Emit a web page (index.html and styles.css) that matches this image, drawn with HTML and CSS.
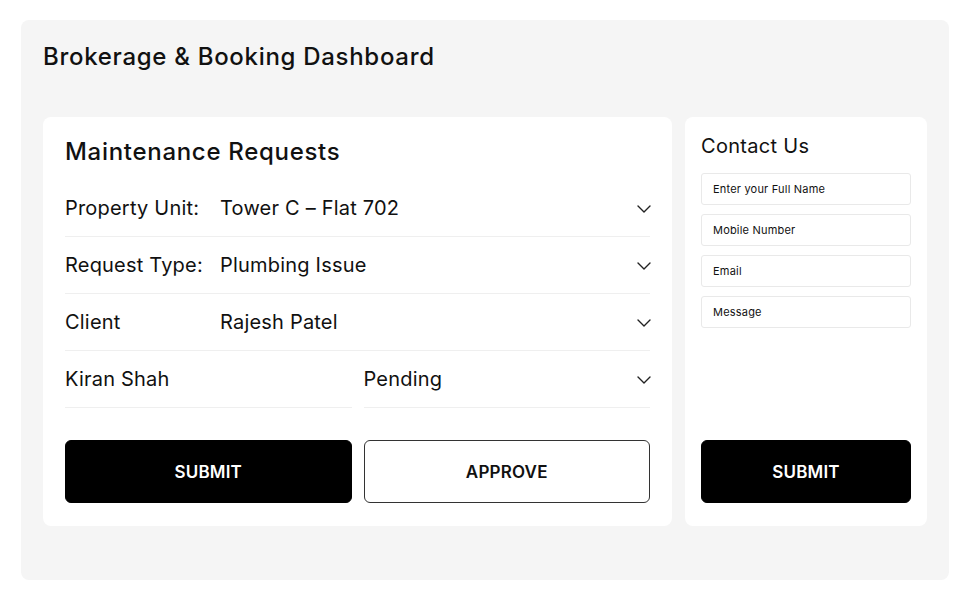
FILE: index.html
```html
<!DOCTYPE html>
<html lang="en">
<head>
<meta charset="utf-8">
<title>Brokerage &amp; Booking Dashboard</title>
<link rel="stylesheet" href="styles.css">
</head>
<body>
<div class="page">
  <main class="shell">
    <h1 class="title">Brokerage &amp; Booking Dashboard</h1>
    <div class="cards">
      <section class="card main-card">
        <h2 class="card-title">Maintenance Requests</h2>
        <div class="rows">
          <div class="row">
            <span class="label">Property Unit:</span>
            <span class="value">Tower C – Flat 702</span>
            <svg class="chev" viewBox="0 0 14 8" width="14" height="8"><path d="M1 1l6 6 6-6" fill="none" stroke="#222" stroke-width="1.4" stroke-linecap="round" stroke-linejoin="round"/></svg>
          </div>
          <div class="row">
            <span class="label">Request Type:</span>
            <span class="value">Plumbing Issue</span>
            <svg class="chev" viewBox="0 0 14 8" width="14" height="8"><path d="M1 1l6 6 6-6" fill="none" stroke="#222" stroke-width="1.4" stroke-linecap="round" stroke-linejoin="round"/></svg>
          </div>
          <div class="row">
            <span class="label">Client</span>
            <span class="value">Rajesh Patel</span>
            <svg class="chev" viewBox="0 0 14 8" width="14" height="8"><path d="M1 1l6 6 6-6" fill="none" stroke="#222" stroke-width="1.4" stroke-linecap="round" stroke-linejoin="round"/></svg>
          </div>
          <div class="split">
            <div class="row">
              <span class="value">Kiran Shah</span>
            </div>
            <div class="row">
              <span class="value">Pending</span>
              <svg class="chev" viewBox="0 0 14 8" width="14" height="8"><path d="M1 1l6 6 6-6" fill="none" stroke="#222" stroke-width="1.4" stroke-linecap="round" stroke-linejoin="round"/></svg>
            </div>
          </div>
        </div>
        <div class="actions">
          <button class="btn btn-dark">SUBMIT</button>
          <button class="btn btn-light">APPROVE</button>
        </div>
      </section>
      <aside class="card side-card">
        <h2 class="side-title">Contact Us</h2>
        <div class="fields">
          <div class="field">Enter your Full Name</div>
          <div class="field">Mobile Number</div>
          <div class="field">Email</div>
          <div class="field">Message</div>
        </div>
        <button class="btn btn-dark side-btn">SUBMIT</button>
      </aside>
    </div>
  </main>
</div>
</body>
</html>
```
FILE: styles.css
```css
* { box-sizing: border-box; }
html, body { margin: 0; padding: 0; background: #fff; }
body {
  font-family: Inter, "Open Sans", "Liberation Sans", sans-serif;
  color: #111;
}
.page { padding: 20px 21px 21px; }
.shell {
  background: #f5f5f5;
  border-radius: 8px;
  padding: 19px 22px 54px;
}
.title {
  margin: 0;
  font-size: 24px;
  line-height: 36px;
  font-weight: 500;
  letter-spacing: 0.7px;
  color: #111;
}
.cards {
  margin-top: 42px;
  display: grid;
  grid-template-columns: 1fr 242px;
  gap: 13px;
  height: 409px;
}
.card {
  background: #fff;
  border-radius: 8px;
}
.main-card {
  padding: 17px 22px 23px;
  display: flex;
  flex-direction: column;
}
.card-title {
  margin: 0;
  font-size: 24px;
  line-height: 36px;
  font-weight: 500;
  letter-spacing: 0.7px;
}
.rows { margin-top: 10px; }
.row {
  height: 57px;
  border-bottom: 1px solid #efefef;
  display: flex;
  align-items: center;
  font-size: 20px;
  letter-spacing: 0.2px;
}
.label { width: 155px; flex: none; }
.value { flex: 1; }
.chev { flex: none; margin-right: -1px; margin-top: 1px; }
.split {
  display: grid;
  grid-template-columns: 1fr 1fr;
  gap: 12px;
}
.actions {
  margin-top: auto;
  display: grid;
  grid-template-columns: 1fr 1fr;
  gap: 12px;
}
.btn {
  font-family: inherit;
  height: 63px;
  border-radius: 6px;
  font-size: 17px;
  font-weight: 600;
  letter-spacing: 0.2px;
  cursor: pointer;
}
.btn-dark { background: #000; color: #fff; border: 1px solid #000; }
.btn-light { background: #fff; color: #111; border: 1px solid #333; }
.side-card {
  padding: 14px 16px 23px;
  display: flex;
  flex-direction: column;
}
.side-title {
  margin: 0;
  font-size: 20px;
  line-height: 30px;
  font-weight: 400;
  letter-spacing: 0.3px;
}
.fields {
  margin-top: 12px;
  display: flex;
  flex-direction: column;
  gap: 9px;
}
.field {
  height: 32px;
  border: 1px solid #e9e9e9;
  border-radius: 3px;
  padding: 0 11px;
  display: flex;
  align-items: center;
  font-size: 11px;
  letter-spacing: 0.2px;
  color: #111;
}
.side-btn { margin-top: auto; width: 100%; }
```
